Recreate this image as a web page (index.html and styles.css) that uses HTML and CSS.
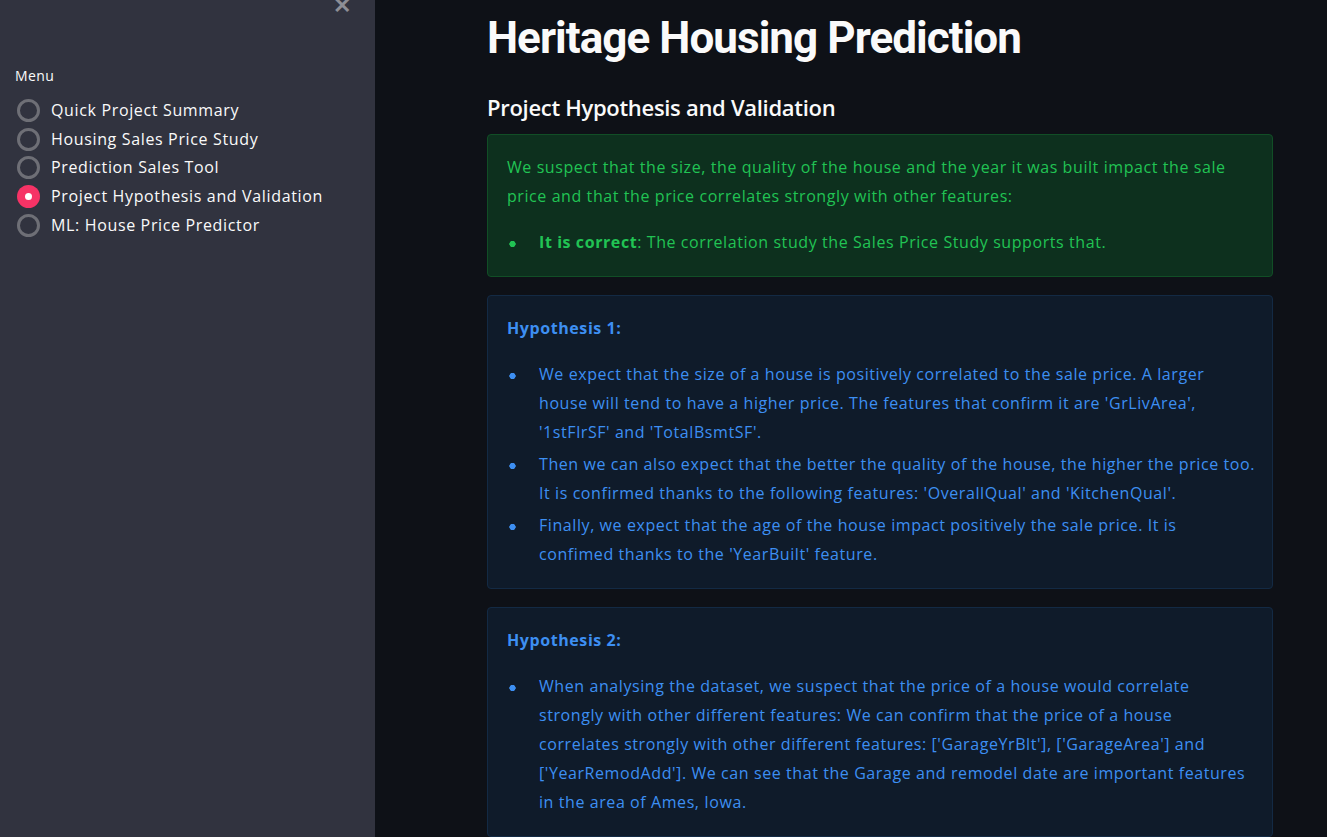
FILE: index.html
```html
<!DOCTYPE html>
<html lang="en">
<head>
<meta charset="utf-8">
<title>Heritage Housing Prediction</title>
<link rel="stylesheet" href="styles.css">
</head>
<body>
<div class="app">
  <aside class="sidebar">
    <div class="sidebar-top">
      <span class="close">&#x2715;</span>
    </div>
    <div class="menu-label">Menu</div>
    <div class="radio-group">
      <label class="radio"><span class="circle"></span><span class="radio-text">Quick Project Summary</span></label>
      <label class="radio"><span class="circle"></span><span class="radio-text">Housing Sales Price Study</span></label>
      <label class="radio"><span class="circle"></span><span class="radio-text">Prediction Sales Tool</span></label>
      <label class="radio checked"><span class="circle"><span class="dot"></span></span><span class="radio-text">Project Hypothesis and Validation</span></label>
      <label class="radio"><span class="circle"></span><span class="radio-text">ML: House Price Predictor</span></label>
    </div>
  </aside>
  <main class="main">
    <div class="content">
      <h1 class="title">Heritage Housing Prediction</h1>
      <h3 class="subtitle">Project Hypothesis and Validation</h3>
      <div class="alert success">
        <p>We suspect that the size, the quality of the house and the year it was built impact the sale price and that the price correlates strongly with other features:</p>
        <ul>
          <li><strong>It is correct</strong>: The correlation study the Sales Price Study supports that.</li>
        </ul>
      </div>
      <div class="alert info">
        <p><strong>Hypothesis 1:</strong></p>
        <ul>
          <li>We expect that the size of a house is positively correlated to the sale price. A larger house will tend to have a higher price. The features that confirm it are 'GrLivArea', '1stFlrSF' and 'TotalBsmtSF'.</li>
          <li>Then we can also expect that the better the quality of the house, the higher the price too. It is confirmed thanks to the following features: 'OverallQual' and 'KitchenQual'.</li>
          <li>Finally, we expect that the age of the house impact positively the sale price. It is confimed thanks to the 'YearBuilt' feature.</li>
        </ul>
      </div>
      <div class="alert info">
        <p><strong>Hypothesis 2:</strong></p>
        <ul>
          <li>When analysing the dataset, we suspect that the price of a house would correlate strongly with other different features: We can confirm that the price of a house correlates strongly with other different features: ['GarageYrBlt'], ['GarageArea'] and ['YearRemodAdd']. We can see that the Garage and remodel date are important features in the area of Ames, Iowa.</li>
        </ul>
      </div>
    </div>
  </main>
</div>
</body>
</html>
```

FILE: styles.css
```css
* { box-sizing: border-box; }
html, body {
  margin: 0;
  padding: 0;
  height: 100%;
  overflow: hidden;
}
body {
  font-family: "Open Sans", "Noto Sans", sans-serif;
  color: #fafafa;
  background: #0e1117;
}
.app {
  display: flex;
  height: 837px;
}
.sidebar {
  width: 375px;
  flex: none;
  background: #31333f;
  padding: 0 15px;
}
.sidebar-top {
  display: flex;
  justify-content: flex-end;
  height: 60px;
  padding-right: 9px;
}
.close {
  color: #8d8e95;
  font-size: 22px;
  font-weight: 700;
  line-height: 1;
  margin-top: -7px;
}
.menu-label {
  font-size: 14px;
  line-height: 20px;
  margin-top: 6px;
  margin-bottom: 13px;
  letter-spacing: 0.4px;
}
.radio-group {
  display: flex;
  flex-direction: column;
  gap: 5.7px;
}
.radio {
  display: flex;
  align-items: center;
  gap: 11px;
  font-size: 16px;
  line-height: 23px;
  padding-left: 2px;
  letter-spacing: 0.65px;
}
.circle {
  width: 23px;
  height: 23px;
  border-radius: 50%;
  border: 3px solid #6e6f76;
  display: flex;
  align-items: center;
  justify-content: center;
  flex: none;
}
.checked .circle {
  border: none;
  background: #f63366;
}
.dot {
  width: 7px;
  height: 7px;
  border-radius: 50%;
  background: #ffffff;
}
.main {
  flex: 1;
  background: #0e1117;
}
.content {
  width: 786px;
  margin-left: 112px;
}
.title {
  font-family: Roboto, "Open Sans", sans-serif;
  font-size: 44px;
  font-weight: 700;
  line-height: 52px;
  margin: 12px 0 0;
  letter-spacing: -0.95px;
}
.subtitle {
  font-size: 22px;
  font-weight: 600;
  line-height: 30px;
  margin: 28px 0 12px;
  letter-spacing: -0.3px;
}
.alert {
  border-radius: 4px;
  padding: 18px 16px 19px 19px;
  margin-bottom: 18px;
  font-size: 16px;
  line-height: 29px;
  letter-spacing: 0.58px;
}
.alert p {
  margin: 0 0 17px;
}
.success {
  background: #0d301e;
  border: 1px solid #114e26;
  color: #21c354;
}
.info {
  background: #0f1b2a;
  border: 1px solid #132a44;
  color: #3d8ff2;
}
.alert ul {
  list-style: none;
  margin: 0;
  padding: 0;
}
.alert li {
  padding-left: 32px;
  text-indent: -32px;
  margin: 0 0 3px;
}
.alert li:last-child {
  margin-bottom: 0;
}
.alert li::before {
  content: "";
  display: inline-block;
  width: 32px;
  height: 8px;
  text-indent: 0;
  vertical-align: middle;
  background: radial-gradient(circle at 5.5px 4px, currentColor 2.9px, transparent 3.4px);
}
.alert strong {
  font-weight: 700;
}
```
